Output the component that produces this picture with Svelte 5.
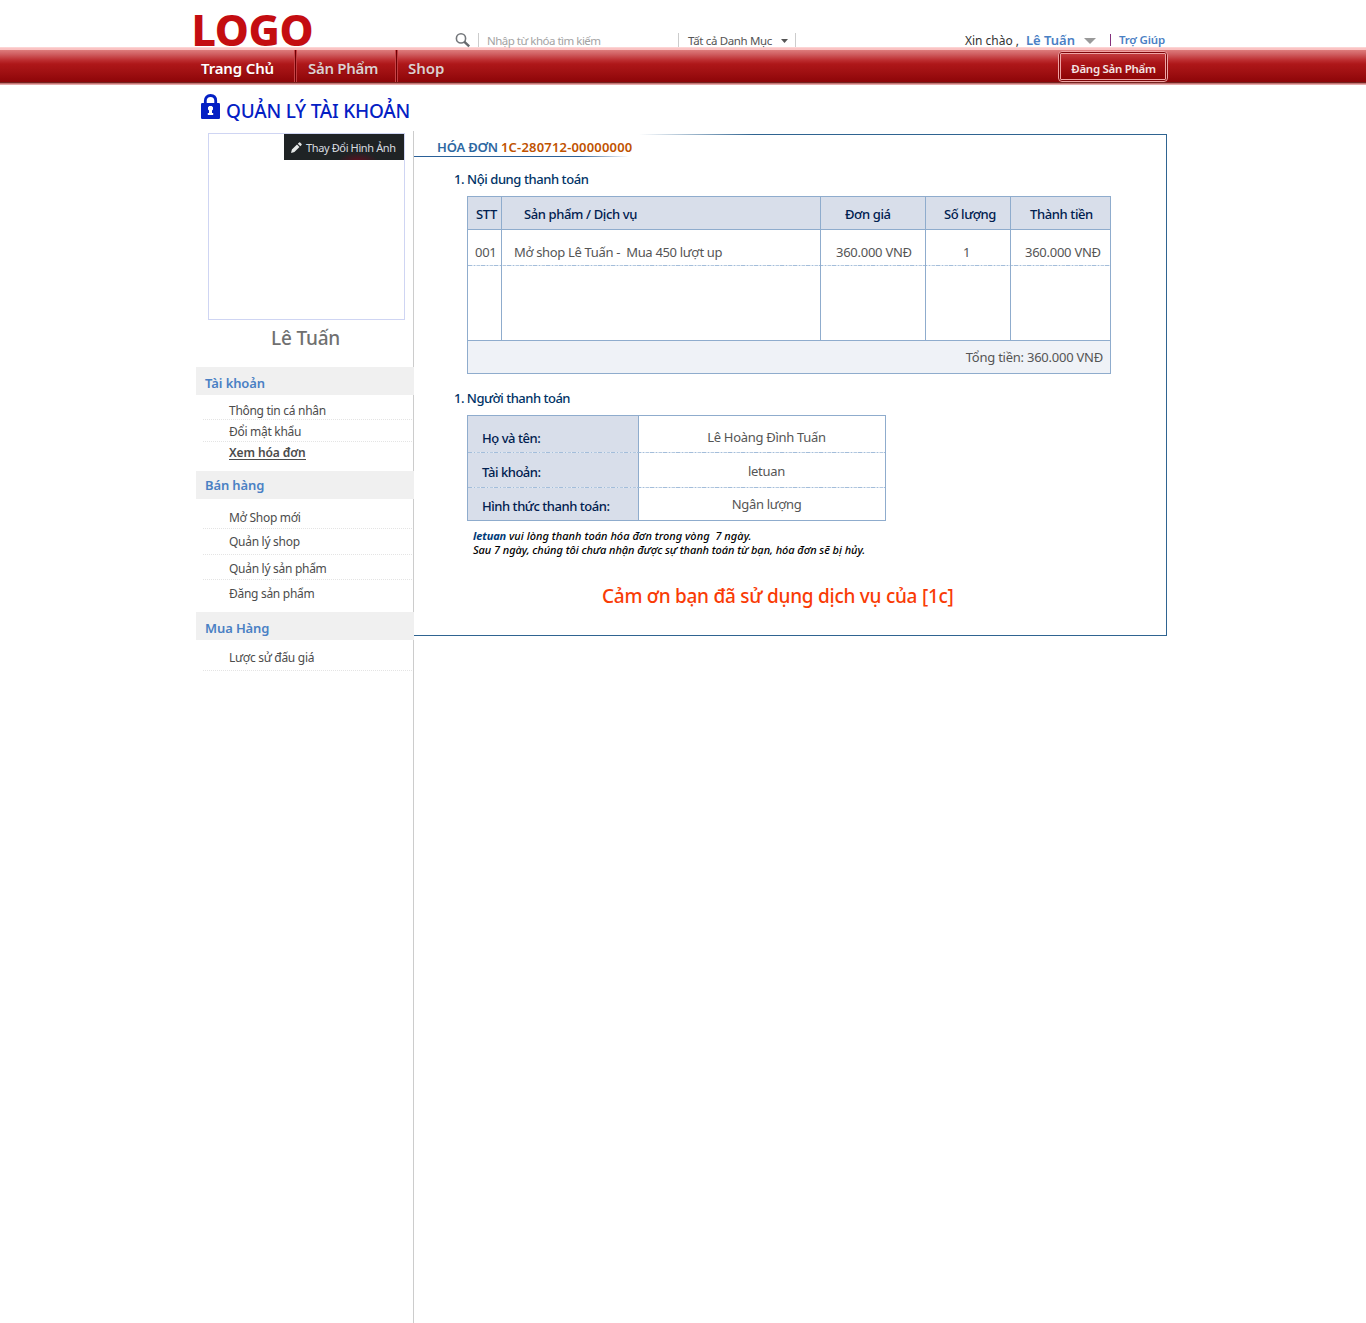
<script>
  // `height` is the row height, `gap` the space kept under the label.
  const groups = [
    {
      title: 'Tài khoản',
      items: [
        { label: 'Thông tin cá nhân', height: 25, gap: 0 },
        { label: 'Đổi mật khẩu', height: 22, gap: 1 },
        { label: 'Xem hóa đơn', height: 29, gap: 11, active: true, last: true }
      ]
    },
    {
      title: 'Bán hàng',
      raised: true,
      items: [
        { label: 'Mở Shop mới', height: 30, gap: 2 },
        { label: 'Quản lý shop', height: 26, gap: 4 },
        { label: 'Quản lý sản phẩm', height: 25, gap: 2 },
        { label: 'Đăng sản phẩm', height: 32, gap: 10, last: true }
      ]
    },
    { title: 'Mua Hàng', items: [{ label: 'Lược sử đấu giá', height: 31, gap: 4 }] }
  ];

  const payer = [
    ['Họ và tên:', 'Lê Hoàng Đình Tuấn'],
    ['Tài khoản:', 'letuan'],
    ['Hình thức thanh toán:', 'Ngân lượng']
  ];
</script>

<header>
  <div class="logo">LOGO</div>
  <svg class="glass" width="16" height="16" viewBox="0 0 16 16">
    <circle cx="6" cy="5.4" r="4.6" fill="none" stroke="#74777b" stroke-width="1.6" />
    <path d="M9.2 8.7L14.2 13.4" stroke="#66696d" stroke-width="2.4" />
  </svg>
  <div class="search">Nhập từ khóa tìm kiếm</div>
  <div class="category">
    <span>Tất cả Danh Mục</span>
    <svg width="7" height="4" viewBox="0 0 7 4"><path d="M0 0H7L3.5 4Z" fill="#555" /></svg>
  </div>
  <div class="hello">Xin chào ,</div>
  <div class="user">
    <span>Lê Tuấn</span>
    <svg width="12" height="6" viewBox="0 0 12 6"><path d="M0 0H12L6 6Z" fill="#999" /></svg>
  </div>
  <div class="help">Trợ Giúp</div>
</header>

<nav>
  <a class="home" href="#home">Trang Chủ</a>
  <a class="products" href="#products">Sản Phẩm</a>
  <a class="shop" href="#shop">Shop</a>
  <button class="post"><span>Đăng Sản Phẩm</span></button>
</nav>

<div class="title">
  <svg width="19" height="26" viewBox="0 0 19 26">
    <path d="M4.3 11V6.8C4.3 3.6 6.3 1.5 9.5 1.5S14.7 3.6 14.7 6.8V11" fill="none" stroke="#0420c4" stroke-width="2.8" />
    <rect y="9" width="19" height="16" rx="1.2" fill="#0420c4" />
    <path d="M7 13.2L8.3 12H10.7L12 13.2V15.4L11 16.4V19H12.2V21H6.8V19H8V16.4L7 15.4Z" fill="#fff" />
  </svg>
  <h1>QUẢN LÝ TÀI KHOẢN</h1>
</div>

<div class="page">
  <aside>
    <div class="avatar">
      <button>
        <svg width="11" height="11" viewBox="0 0 11 11">
          <path d="M0 11L.9 7.6L6 2.5L8.5 5L3.4 10.1ZM6.8 1.7L8.1 .4Q8.6 0 9.1 .4L10.6 1.9Q11 2.4 10.6 2.9L9.3 4.2Z" fill="#e6e8e8" />
        </svg>
        <span>Thay Đổi Hình Ảnh</span>
      </button>
    </div>
    <div class="name">Lê Tuấn</div>
    {#each groups as group}
      <h2 class:raised={group.raised}>{group.title}</h2>
      <ul>
        {#each group.items as item}
          <li class:last={item.last} style:height="{item.height}px" style:padding-bottom="{item.gap}px">
            <span class:active={item.active}>{item.label}</span>
          </li>
        {/each}
      </ul>
    {/each}
  </aside>

  <main>
    <div class="bill"><span>HÓA ĐƠN</span><b>1C-280712-00000000</b></div>

    <h3 class="first">1. Nội dung thanh toán</h3>
    <div class="items">
      <div class="row head">
        <div>STT</div>
        <div>Sản phẩm / Dịch vụ</div>
        <div>Đơn giá</div>
        <div>Số lượng</div>
        <div>Thành tiền</div>
      </div>
      <div class="row line">
        <div>001</div>
        <div>Mở shop Lê Tuấn -&nbsp; Mua 450 lượt up</div>
        <div>360.000 VNĐ</div>
        <div>1</div>
        <div>360.000 VNĐ</div>
      </div>
      <div class="row blank"><div></div><div></div><div></div><div></div><div></div></div>
      <div class="total">Tổng tiền: 360.000 VNĐ</div>
    </div>

    <h3 class="second">1. Người thanh toán</h3>
    <div class="payer">
      {#each payer as [label, value]}
        <div class="pair">
          <div class="label">{label}</div>
          <div class="value">{value}</div>
        </div>
      {/each}
    </div>

    <p class="note">
      <span class="l1"><b>letuan</b> vui lòng thanh toán hóa đơn trong vòng&nbsp; 7 ngày.</span>
      <span class="l2">Sau 7 ngày, chúng tôi chưa nhận được sự thanh toán từ bạn, hóa đơn sẽ bị hủy.</span>
    </p>
    <p class="thanks">Cảm ơn bạn đã sử dụng dịch vụ của [1c]</p>
  </main>
</div>

<style>
  :global(body) {
    background: #fff;
    font-family: 'Noto Sans', 'Open Sans', sans-serif;
    overflow-x: hidden;
  }
  :global(#app) {
    width: 1366px;
    white-space: nowrap;
  }
  h1, h2, h3, p, ul {
    margin: 0;
    padding: 0;
  }
  svg {
    display: block;
    flex: none;
  }
  button {
    margin: 0;
    padding: 0;
    border: 0;
    font-family: inherit;
  }

  header {
    display: flex;
    align-items: flex-start;
    box-sizing: border-box;
    height: 47px;
    padding-left: 192px;
    font-size: 11.5px;
    line-height: 20px;
  }
  .logo {
    width: 263px;
    margin: 10px 0 -3px;
    text-indent: -0.5px;
    font-size: 43px;
    line-height: 40px;
    font-weight: 800;
    letter-spacing: -0.4px;
    color: #c40d11;
  }
  .glass {
    margin-top: 33px;
  }
  .search {
    box-sizing: border-box;
    width: 200px;
    height: 14px;
    margin: 33px 0 0 7px;
    padding-left: 8px;
    border-left: 1px solid #ccc;
    line-height: 16px;
    letter-spacing: -0.5px;
    color: #a3a3a3;
  }
  .category {
    display: flex;
    box-sizing: border-box;
    width: 118px;
    height: 14px;
    margin-top: 33px;
    padding-left: 9px;
    border: solid #ccc;
    border-width: 0 1px;
    line-height: 16px;
    letter-spacing: -0.34px;
    color: #555;
  }
  .category span {
    width: 93px;
  }
  .category svg {
    margin-top: 6px;
  }
  .hello {
    width: 61px;
    margin: 31px 0 0 169px;
    font-size: 12px;
    letter-spacing: -0.02px;
    color: #333;
  }
  .user {
    display: flex;
    width: 84px;
    margin-top: 30px;
    font-size: 13px;
    font-weight: 600;
    color: #4a80c4;
  }
  .user span {
    width: 58px;
  }
  .user svg {
    margin-top: 8px;
  }
  .help {
    height: 12px;
    margin-top: 34px;
    padding-left: 8px;
    border-left: 1px solid #84307c;
    line-height: 12px;
    font-weight: 600;
    letter-spacing: -0.18px;
    color: #4a80c4;
  }

  nav {
    display: flex;
    box-sizing: border-box;
    height: 38px;
    padding: 3px 0 3px 200px;
    background: linear-gradient(
      #fde3e3 0, #fbc4c4 1px, #f9c0c0 3px, #dd7b7b 3px, #d06062 7px, #bd2e31 13px, #ae1719 17px,
      #a01012 25px, #8d0508 35px, #6e1512 35px, #7a3530 36px, #b06060 36px, #d88a8a 37px, #f2c8c8 38px
    );
  }
  nav a {
    box-sizing: border-box;
    height: 32px;
    font-size: 15px;
    line-height: 36px;
    font-weight: 600;
    color: #dcd0d0;
    text-decoration: none;
    text-shadow: 0 1px 1px #7007;
  }
  nav .home {
    width: 94px;
    padding-left: 1px;
    letter-spacing: -0.15px;
    color: #fff;
  }
  nav .products,
  nav .shop {
    border-left: 1px solid #c74346;
    box-shadow: inset 1px 0 #6d0003, inset 2px 0 #c23c40;
  }
  nav .products {
    width: 101px;
    padding-left: 13px;
    letter-spacing: -0.3px;
  }
  nav .shop {
    width: 60px;
    padding-left: 12px;
  }
  .post {
    width: 110px;
    height: 31px;
    margin: 1px 0 0 603px;
    padding: 1px;
    border: 1.5px solid #f0a3a3;
    border-radius: 4px;
    background: #7d0508;
  }
  .post span {
    display: block;
    box-sizing: border-box;
    height: 27px;
    padding-left: 1px;
    border: 1px solid #efa5a5;
    border-radius: 1px;
    background: linear-gradient(#c23b3d, #ab1518 35%, #8d0406);
    font-size: 11.5px;
    line-height: 30px;
    font-weight: 600;
    letter-spacing: -0.3px;
    color: #f3e4e2;
  }

  .title {
    display: flex;
    height: 46px;
    padding-left: 201px;
  }
  .title svg {
    margin-top: 9px;
  }
  h1 {
    margin: 11px 0 0 6px;
    font-size: 19px;
    line-height: 30px;
    font-weight: 500;
    letter-spacing: -0.23px;
    color: #0420c4;
  }

  .page {
    display: flex;
    padding-left: 196px;
  }
  aside {
    box-sizing: border-box;
    width: 218px;
    height: 1192px;
    padding-top: 2px;
    border-right: 1px solid #ccc;
  }
  .avatar {
    display: flex;
    justify-content: flex-end;
    box-sizing: border-box;
    width: 197px;
    height: 187px;
    margin-left: 12px;
    border: 1px solid #cfd5f3;
  }
  .avatar button {
    display: flex;
    width: 120px;
    height: 26px;
    background: radial-gradient(ellipse 20px 9px at 74px 27px, #5a1020, #1f2325) #1f2325;
    color: #d9dde0;
    font-size: 11px;
    line-height: 28px;
    letter-spacing: -0.37px;
  }
  .avatar svg {
    margin: 8px 4px 0 7px;
  }
  .name {
    box-sizing: border-box;
    height: 47px;
    padding: 1px 0 0 75px;
    font-size: 19px;
    line-height: 34px;
    font-weight: 500;
    letter-spacing: -0.2px;
    color: #707070;
  }
  h2 {
    box-sizing: border-box;
    width: 218px;
    height: 28px;
    padding: 2px 0 0 9px;
    background: #f0f0f0;
    font-size: 13px;
    line-height: 28px;
    font-weight: 600;
    letter-spacing: -0.12px;
    color: #4a80c4;
  }
  h2.raised {
    padding-top: 0;
  }
  ul {
    list-style: none;
  }
  li {
    display: flex;
    align-items: flex-end;
    box-sizing: border-box;
    width: 209px;
    margin-left: 7px;
    padding-left: 26px;
    border-bottom: 1px dotted #e4e4e4;
    font-size: 12px;
    line-height: 16px;
    letter-spacing: -0.29px;
    color: #4c4c4c;
  }
  li.last {
    border: 0;
  }
  .active {
    height: 14px;
    border-bottom: 1px solid #4c4c4c;
    font-weight: 600;
    letter-spacing: -0.1px;
  }

  main {
    box-sizing: border-box;
    width: 753px;
    height: 502px;
    margin-top: 3px;
    border: solid #2f6491;
    border-width: 0 1px 1px 0;
    background: linear-gradient(90deg, transparent 225px, #2f6491 340px) top / 100% 1px no-repeat;
  }
  .bill {
    display: flex;
    box-sizing: border-box;
    height: 23px;
    padding: 2px 0 0 23px;
    background: linear-gradient(90deg, #2a6098 165px, transparent 215px) bottom / 100% 1px no-repeat;
    font-size: 13px;
    line-height: 22px;
    font-weight: 600;
    color: #2d68a2;
  }
  .bill span {
    width: 64px;
    letter-spacing: -0.18px;
  }
  .bill b {
    font-weight: 600;
    letter-spacing: 0.18px;
    color: #c05200;
  }
  h3 {
    padding-left: 40px;
    font-size: 13px;
    line-height: 20px;
    font-weight: 500;
    letter-spacing: -0.43px;
    color: #003366;
  }
  h3.first {
    margin: 12px 0 7px;
  }
  h3.second {
    margin: 14px 0 7px;
    letter-spacing: -0.5px;
  }

  .items {
    box-sizing: border-box;
    width: 644px;
    margin-left: 53px;
    border: 1px solid #8faccd;
    font-size: 13px;
    line-height: 20px;
    color: #555;
  }
  .row {
    display: grid;
    grid-template-columns: 34px 319px 105px 85px 99px;
    box-sizing: border-box;
  }
  .row > div {
    border-right: 1px solid #8faccd;
  }
  .row > div:last-child {
    border: 0;
  }
  .head {
    height: 33px;
    border-bottom: 1px solid #8faccd;
    background: #d8deea;
    line-height: 34px;
    font-weight: 500;
    letter-spacing: -0.38px;
    color: #00204f;
  }
  .head > :nth-child(1) { padding-left: 8px; }
  .head > :nth-child(2) { padding-left: 22px; }
  .head > :nth-child(3) { padding-left: 24px; }
  .head > :nth-child(4) { padding-left: 18px; letter-spacing: -0.46px; }
  .head > :nth-child(5) { padding-left: 19px; }
  .line {
    height: 36px;
    letter-spacing: -0.26px;
  }
  .line,
  .pair {
    background: repeating-linear-gradient(
      90deg, #a3bdda 0 4px, #dbe5f0 4px 6px, #a3bdda 6px 7px, #dbe5f0 7px 9px, #b4c9e0 9px 12px, #e6edf5 12px 13px
    ) bottom / 100% 1px no-repeat;
  }
  .line > div {
    padding-top: 12px;
  }
  .line > :nth-child(1) { padding-left: 7px; }
  .line > :nth-child(2) { padding-left: 12px; letter-spacing: -0.33px; }
  .line > :nth-child(3) { padding-left: 15px; }
  .line > :nth-child(4) { padding-left: 37px; }
  .line > :nth-child(5) { padding-left: 14px; }
  .blank {
    height: 75px;
    border-bottom: 1px solid #8faccd;
  }
  .total {
    height: 32px;
    padding-right: 7px;
    background: #eff2f7;
    line-height: 32px;
    letter-spacing: -0.24px;
    text-align: right;
  }

  .payer {
    box-sizing: border-box;
    width: 419px;
    margin-left: 53px;
    border: 1px solid #8faccd;
    background: linear-gradient(90deg, #d8deea 170px, #8faccd 170px 171px, transparent 171px);
    font-size: 13px;
    line-height: 20px;
  }
  .pair {
    display: grid;
    grid-template-columns: 171px 1fr;
    box-sizing: border-box;
  }
  .label {
    padding-left: 14px;
    font-weight: 500;
    letter-spacing: -0.46px;
    color: #00204f;
  }
  .value {
    padding-left: 9px;
    letter-spacing: -0.3px;
    text-align: center;
    color: #555;
  }
  .pair:nth-child(1) { height: 37px; padding-top: 12px; }
  .pair:nth-child(2) { height: 35px; padding-top: 9px; }
  .pair:nth-child(3) { height: 32px; padding-top: 8px; background: none; }
  .pair .value { margin-top: -1px; }
  .pair:nth-child(3) .value { margin-top: -2px; }

  .note {
    margin: 8px 0 0 59px;
    font-size: 11px;
    line-height: 14px;
    font-style: italic;
    font-weight: 500;
    color: #000;
  }
  .note span {
    display: block;
  }
  .note b {
    letter-spacing: -0.1px;
    color: #003a78;
  }
  .l1 { letter-spacing: 0.03px; }
  .l2 { letter-spacing: -0.06px; }
  .thanks {
    margin: 25px 0 0 188px;
    font-size: 19px;
    line-height: 28px;
    font-weight: 500;
    letter-spacing: -0.26px;
    color: #f93b05;
  }
</style>
